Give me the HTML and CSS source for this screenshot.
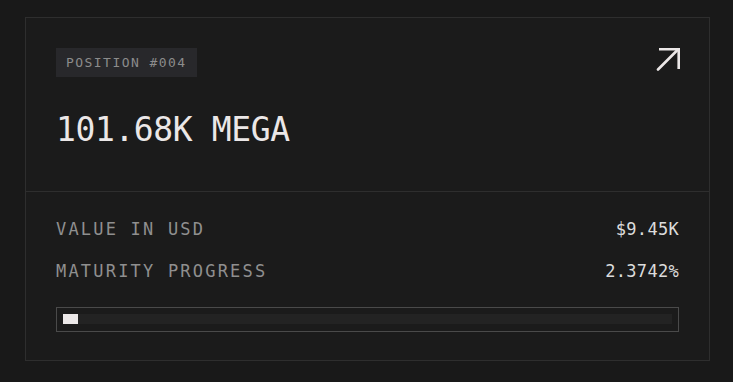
FILE: index.html
```html
<!DOCTYPE html>
<html>
<head>
<meta charset="utf-8">
<link rel="stylesheet" href="styles.css">
</head>
<body>
<div class="card">
  <div class="top">
    <div class="head">
      <span class="badge">POSITION #004</span>
      <svg class="arrow" width="24" height="24" viewBox="0 0 24 24" fill="none" stroke="#ebe7e7" stroke-width="2.6" stroke-linecap="butt">
        <path d="M2 22.5 L21.5 3" stroke-linecap="round"/>
        <path d="M3 2.3 H22.7 V22"/>
      </svg>
    </div>
    <div class="amount">101.68K MEGA</div>
  </div>
  <div class="bottom">
    <div class="row"><span class="label">VALUE IN USD</span><span class="value">$9.45K</span></div>
    <div class="row"><span class="label">MATURITY PROGRESS</span><span class="value">2.3742%</span></div>
    <div class="progress">
      <div class="track"><div class="fill" style="width:2.3742%"></div></div>
    </div>
  </div>
</div>
</body>
</html>
```

FILE: styles.css
```css
html, body {
  margin: 0;
  padding: 0;
  background: #191919;
  font-family: "DejaVu Sans Mono", "Liberation Mono", monospace;
}
.card {
  box-sizing: border-box;
  margin: 17px 0 0 25px;
  width: 685px;
  height: 344px;
  background: #1b1b1b;
  border: 1px solid #2e2e2e;
}
.top {
  box-sizing: border-box;
  height: 174px;
  padding: 30px 30px 0 30px;
  border-bottom: 1px solid #2e2e2e;
}
.head {
  display: flex;
  justify-content: space-between;
  align-items: flex-start;
}
.badge {
  display: inline-block;
  height: 29px;
  line-height: 29px;
  padding: 0 10px 0 10px;
  background: #28282b;
  color: #8c8c8c;
  font-size: 13px;
  letter-spacing: 1.45px;
}
.arrow {
  margin-top: -1px;
  margin-right: -1px;
}
.amount {
  margin-top: 36px;
  font-size: 33px;
  line-height: 34px;
  color: #ebe7e7;
  letter-spacing: -0.4px;
}
.bottom {
  padding: 27px 30px 0 30px;
}
.row {
  display: flex;
  justify-content: space-between;
  height: 20px;
  line-height: 20px;
  margin-bottom: 22px;
}
.label {
  font-size: 17px;
  color: #8f8f8f;
  letter-spacing: 2.2px;
}
.value {
  font-size: 17px;
  color: #dcdcdc;
  letter-spacing: 0.3px;
}
.row + .row {
  margin-bottom: 26px;
}
.progress {
  box-sizing: border-box;
  height: 25px;
  border: 1px solid #4a4a4a;
  padding: 6px 6px 7px 6px;
}
.track {
  height: 10px;
  background: #232323;
}
.fill {
  height: 10px;
  background: #ece8e8;
  min-width: 15px;
}
```
